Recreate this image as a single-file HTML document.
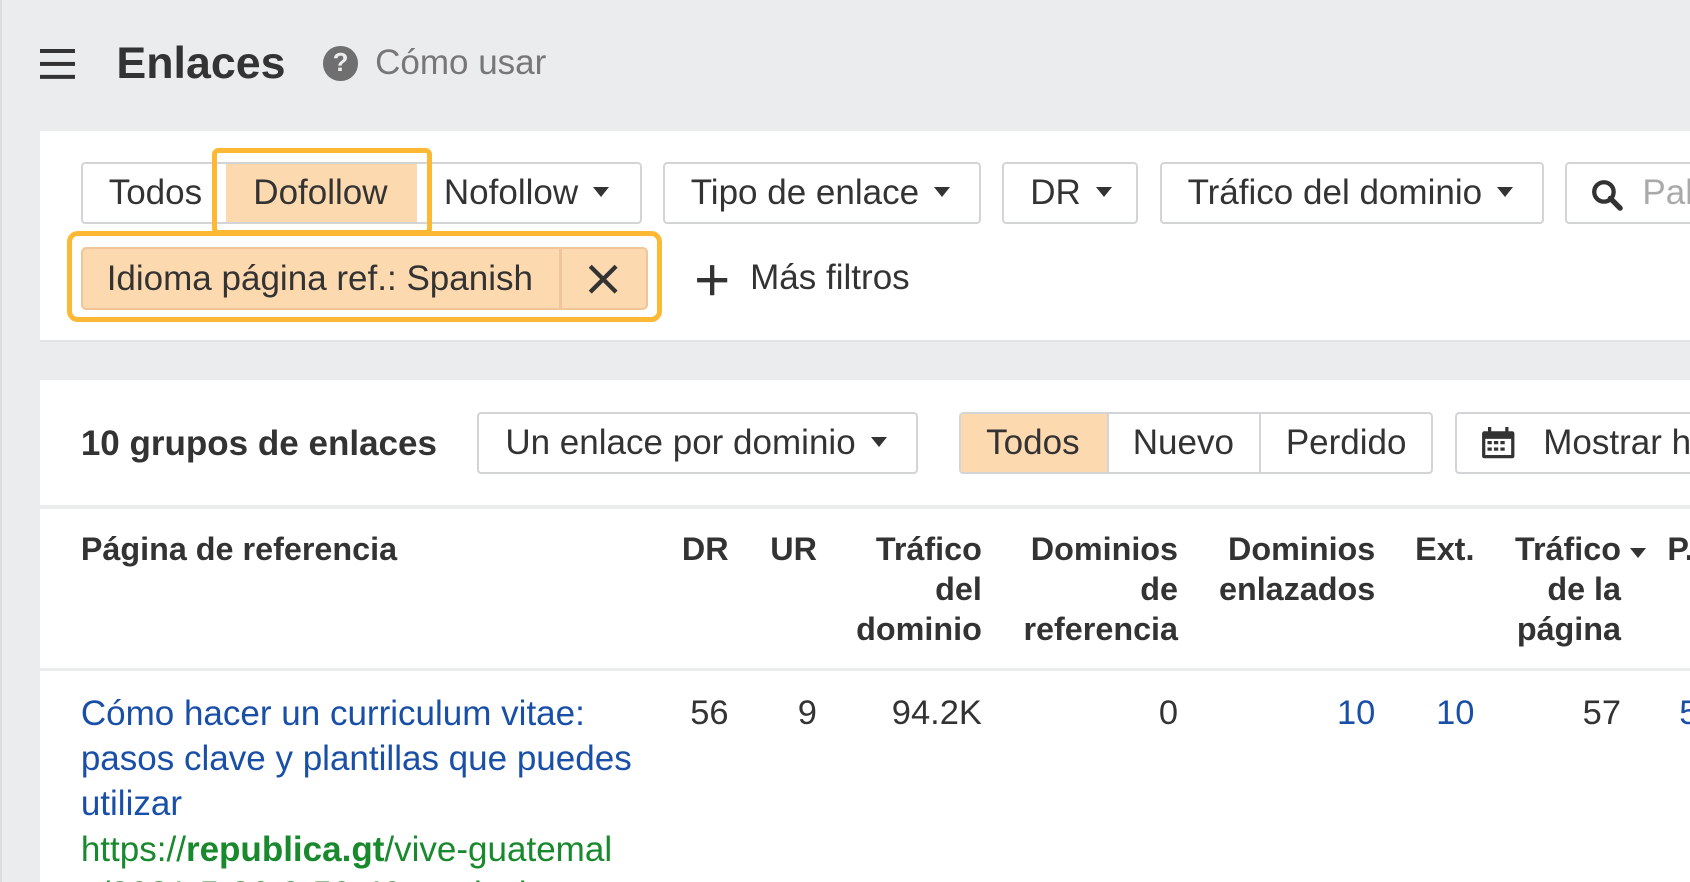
<!DOCTYPE html>
<html><head><meta charset="utf-8"><style>
*{box-sizing:border-box;margin:0;padding:0}
html,body{width:1690px;height:882px;overflow:hidden}
body{background:#ebecee;font-family:"Liberation Sans",Arial,sans-serif;color:#333}
#w{zoom:1.0778;width:1568px;height:818px;position:relative;overflow:hidden}
.a{position:absolute;white-space:nowrap}
.btn{position:absolute;border:2px solid #d3d4d6;border-radius:4px;background:#fff;height:58px;font-size:32.5px;line-height:54px;padding-left:24px;color:#333;white-space:nowrap;overflow:hidden}
.tri{display:inline-block;width:0;height:0;border-left:8px solid transparent;border-right:8px solid transparent;border-top:10px solid #333;vertical-align:middle;margin-left:14px;margin-top:-4px}
.h{font-weight:bold;font-size:30px;line-height:37px;text-align:right;color:#333}
.c{font-size:32px;line-height:42px;text-align:right}
</style></head><body><div id="w">
<div class="a" style="left:0;top:0;width:2px;height:818px;background:#dcdde0"></div>
<div class="a" style="left:37px;top:45px;width:33px;height:4px;background:#333;box-shadow:0 12px 0 #333,0 24px 0 #333"></div>
<div class="a" style="left:108px;top:36px;font-size:41.5px;font-weight:bold;color:#333">Enlaces</div>
<div class="a" style="left:300px;top:43px;width:32px;height:32px;border-radius:50%;background:#6f6f6f;color:#ebecee;font-weight:bold;font-size:24px;text-align:center;line-height:32px">?</div>
<div class="a" style="left:348px;top:40px;font-size:32.5px;color:#777">Cómo usar</div>

<div class="a" style="left:37px;top:122px;width:1531px;height:195px;background:#fff;border-bottom:2px solid #e3e4e6"></div>
<div class="btn" style="left:75px;top:150px;width:521px"><span style="position:absolute;left:24px">Todos</span><span style="position:absolute;left:335px">Nofollow<span class="tri"></span></span></div>
<div class="a" style="left:210px;top:152px;width:177px;height:54px;background:#fdd9b0"></div>
<div class="a" style="left:235px;top:150px;font-size:32.5px;line-height:58px">Dofollow</div>
<div class="a" style="left:197px;top:137px;width:204px;height:81px;border:5px solid #fdb933;border-radius:6px"></div>
<div class="btn" style="left:615px;top:150px;width:295px">Tipo de enlace<span class="tri"></span></div>
<div class="btn" style="left:930px;top:150px;width:126px">DR<span class="tri"></span></div>
<div class="btn" style="left:1076px;top:150px;width:357px">Tráfico del dominio<span class="tri"></span></div>
<div class="btn" style="left:1452px;top:150px;width:200px;color:#aaa"><svg style="position:absolute;left:22px;top:14px" width="30" height="30" viewBox="0 0 30 30"><circle cx="12" cy="12" r="9" fill="none" stroke="#333" stroke-width="4"/><path d="M18 18l9 9" stroke="#333" stroke-width="5" stroke-linecap="round"/></svg><span style="position:absolute;left:70px">Palabras</span></div>

<div class="a" style="left:75px;top:229px;width:526px;height:59px;background:#fdd9b0;border:2px solid #f0c598;border-radius:5px"></div>
<div class="a" style="left:519px;top:231px;width:2px;height:55px;background:#f0c598"></div>
<div class="a" style="left:99px;top:229px;font-size:32.5px;line-height:59px">Idioma página ref.: Spanish</div>
<svg class="a" style="left:545px;top:244px" width="30" height="30" viewBox="0 0 30 30"><path d="M3 3L27 27M27 3L3 27" stroke="#333" stroke-width="4"/></svg>
<div class="a" style="left:62px;top:214px;width:552px;height:85px;border:5px solid #fdb933;border-radius:10px"></div>
<svg class="a" style="left:646px;top:245px" width="30" height="30" viewBox="0 0 30 30"><path d="M15 1V29M1 15H29" stroke="#333" stroke-width="4"/></svg>
<div class="a" style="left:696px;top:239px;font-size:32.5px">Más filtros</div>

<div class="a" style="left:37px;top:353px;width:1531px;height:470px;background:#fff"></div>
<div class="a" style="left:75px;top:393px;font-size:32.5px;font-weight:bold">10 grupos de enlaces</div>
<div class="btn" style="left:443px;top:382px;width:409px">Un enlace por dominio<span class="tri"></span></div>
<div class="btn" style="left:890px;top:382px;width:440px;padding:0"></div>
<div class="a" style="left:892px;top:384px;width:135px;height:54px;background:#fdd9b0"></div>
<div class="a" style="left:1027px;top:384px;width:2px;height:54px;background:#d3d4d6"></div>
<div class="a" style="left:1168px;top:384px;width:2px;height:54px;background:#d3d4d6"></div>
<div class="a" style="left:915px;top:382px;font-size:32.5px;line-height:58px">Todos</div>
<div class="a" style="left:1051px;top:382px;font-size:32.5px;line-height:58px">Nuevo</div>
<div class="a" style="left:1193px;top:382px;font-size:32.5px;line-height:58px">Perdido</div>
<div class="btn" style="left:1350px;top:382px;width:300px"><svg style="position:absolute;left:22px;top:12px" width="32" height="30" viewBox="0 0 32 30"><rect x="1" y="4" width="30" height="25" rx="2" fill="#333"/><rect x="4" y="11" width="24" height="15" fill="#fff"/><path d="M8 0v7M24 0v7" stroke="#333" stroke-width="3"/><g fill="#333"><rect x="6" y="13" width="4" height="3"/><rect x="12" y="13" width="4" height="3"/><rect x="18" y="13" width="4" height="3"/><rect x="6" y="19" width="4" height="3"/><rect x="12" y="19" width="4" height="3"/><rect x="18" y="19" width="4" height="3"/></g></svg><span style="position:absolute;left:80px">Mostrar historial</span></div>
<div class="a" style="left:37px;top:469px;width:1531px;height:3px;background:#ebecee"></div>

<div class="a h" style="left:75px;top:492px;text-align:left">Página de referencia</div>
<div class="a h" style="right:892px;top:492px">DR</div>
<div class="a h" style="right:810px;top:492px">UR</div>
<div class="a h" style="right:657px;top:492px">Tráfico<br>del<br>dominio</div>
<div class="a h" style="right:475px;top:492px">Dominios<br>de<br>referencia</div>
<div class="a h" style="right:292px;top:492px">Dominios<br>enlazados</div>
<div class="a h" style="right:200px;top:492px">Ext.</div>
<div class="a h" style="right:64px;top:492px">Tráfico<br>de la<br>página</div>
<div class="a" style="left:1512px;top:508px;border-left:8px solid transparent;border-right:8px solid transparent;border-top:10px solid #333"></div>
<div class="a h" style="left:1547px;top:492px;text-align:left">P.</div>
<div class="a" style="left:37px;top:620px;width:1531px;height:3px;background:#ebecee"></div>

<div class="a" style="left:75px;top:641px;font-size:32.5px;line-height:42px;color:#1a4fa8">Cómo hacer un curriculum vitae:<br>pasos clave y plantillas que puedes<br>utilizar</div>
<div class="a" style="left:75px;top:767px;font-size:32.5px;line-height:42px;color:#19892e">https://<b>republica.gt</b>/vive-guatemal<br>a/2021-5-26-9-50-40-curriculum</div>
<div class="a c" style="right:892px;top:641px">56</div>
<div class="a c" style="right:810px;top:641px">9</div>
<div class="a c" style="right:657px;top:641px">94.2K</div>
<div class="a c" style="right:475px;top:641px">0</div>
<div class="a c" style="right:292px;top:641px;color:#1a4fa8">10</div>
<div class="a c" style="right:200px;top:641px;color:#1a4fa8">10</div>
<div class="a c" style="right:64px;top:641px">57</div>
<div class="a c" style="left:1558px;top:641px;text-align:left;color:#1a4fa8">5</div>
</div></body></html>
